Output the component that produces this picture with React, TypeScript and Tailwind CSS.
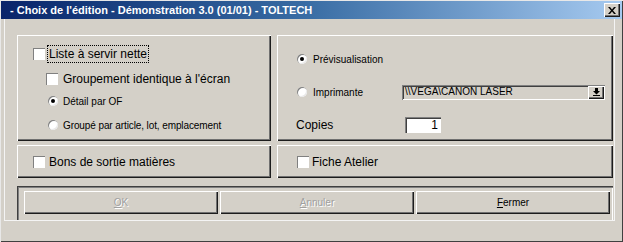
import React from "react";

const raised = "shadow-[inset_1px_1px_0_#ffffff,inset_-1px_-1px_0_#1c1c1c,inset_-2px_-2px_0_#707070]";
const sunken = "shadow-[inset_1px_1px_0_#808080,inset_-1px_-1px_0_#ffffff]";

function CheckBox() {
  return <span className={`w-[12px] h-[12px] bg-white shrink-0 ${sunken}`} />;
}

function Radio({ checked }: { checked?: boolean }) {
  return (
    <span className="w-[10px] h-[10px] rounded-full bg-white shrink-0 flex items-center justify-center shadow-[inset_1px_1px_0_#808080,inset_-1px_-1px_0_#e8e8e8]">
      {checked && <span className="w-[4px] h-[4px] rounded-full bg-black" />}
    </span>
  );
}

function DialogButton({ label, accel, disabled }: { label: string; accel: string; disabled?: boolean }) {
  const rest = label.slice(1);
  return (
    <div
      className={`w-[194px] h-[23px] flex items-center justify-center text-[10px] ${raised} ${
        disabled ? "text-[#a0a0a0] [text-shadow:1px_1px_0_#ffffff]" : "text-black"
      }`}
    >
      <span>
        <span className="underline">{accel}</span>
        {rest}
      </span>
    </div>
  );
}

export default function App() {
  return (
    <div
      className="w-[623px] h-[242px] bg-[#d4d0c8] flex flex-col text-black shadow-[inset_1px_1px_0_#e8e8e8,inset_-1px_-1px_0_#404040]"
      style={{ fontFamily: '"Liberation Sans", Arial, sans-serif' }}
    >
      {/* title bar */}
      <div className="h-[18px] mx-[1px] mt-[1px] flex items-center bg-gradient-to-r from-[#0a246a] via-[#3a6ea5] to-[#a6caf0]">
        <span className="ml-[9px] text-white font-bold text-[11px]">
          - Choix de l'édition - Démonstration 3.0 (01/01) - TOLTECH
        </span>
        <div className={`ml-auto mr-[2px] w-[16px] h-[14px] bg-[#d4d0c8] flex items-center justify-center ${raised}`}>
          <svg width="8" height="7" viewBox="0 0 8 7">
            <path d="M0 0h2l2 2.5L6 0h2L5 3.5 8 7H6L4 4.5 2 7H0l3-3.5z" fill="#000" />
          </svg>
        </div>
      </div>

      {/* body */}
      <div className="flex-1 ml-[4px] mr-[8px] border-l border-r border-b border-[#f4f4f4] pl-[12px] pt-[16px] flex flex-col">
        <div className="flex gap-[6px]">
          {/* left panel */}
          <div className={`w-[254px] h-[106px] flex flex-col pl-[16px] ${raised}`}>
            <div className="h-[18px] mt-[10px] flex items-center">
              <CheckBox />
              <span className="ml-[3px] px-[1px] text-[12px] leading-[16px] outline outline-1 outline-dotted outline-black">
                Liste à servir nette
              </span>
            </div>
            <div className="h-[18px] mt-[7px] ml-[13px] flex items-center">
              <CheckBox />
              <span className="ml-[5px] text-[12px]">Groupement identique à l'écran</span>
            </div>
            <div className="h-[18px] mt-[4px] ml-[15px] flex items-center">
              <Radio checked />
              <span className="ml-[5px] text-[10px]">Détail par OF</span>
            </div>
            <div className="h-[18px] mt-[6px] ml-[15px] flex items-center">
              <Radio />
              <span className="ml-[5px] text-[10px] tracking-[-0.1px]">Groupé par article, lot, emplacement</span>
            </div>
          </div>

          {/* right panel */}
          <div className={`w-[336px] h-[106px] flex flex-col pl-[20px] ${raised}`}>
            <div className="h-[18px] mt-[15px] flex items-center">
              <Radio checked />
              <span className="ml-[6px] text-[10px]">Prévisualisation</span>
            </div>
            <div className="h-[18px] mt-[15px] flex items-center">
              <Radio />
              <span className="ml-[6px] text-[10px] w-[89px]">Imprimante</span>
              <div className="w-[203px] h-[15px] bg-[#d4d0c8] flex items-center shadow-[inset_1px_1px_0_#808080,inset_-1px_-1px_0_#ffffff,inset_2px_2px_0_#404040]">
                <span className="ml-[3px] text-[10px] flex-1 leading-none">\\VEGA\CANON LASER</span>
                <div className={`w-[16px] h-[13px] mr-[1px] flex items-center justify-center ${raised}`}>
                  <svg width="7" height="8" viewBox="0 0 7 8">
                    <path d="M2 0h3v3h2L3.5 6.5 0 3h2z" fill="#000" />
                    <rect x="0" y="7" width="7" height="1" fill="#000" />
                  </svg>
                </div>
              </div>
            </div>
            <div className="h-[18px] mt-[15px] flex items-center">
              <span className="text-[12px] w-[109px] -ml-[1px]">Copies</span>
              <div className="w-[36px] h-[16px] bg-white flex items-center justify-end pr-[3px] text-[12px] shadow-[inset_1px_1px_0_#808080,inset_2px_2px_0_#404040,inset_-1px_-1px_0_#ffffff]">
                1
              </div>
            </div>
          </div>
        </div>

        <div className="flex gap-[6px] mt-[4px]">
          <div className={`w-[254px] h-[33px] flex items-center pl-[16px] ${raised}`}>
            <CheckBox />
            <span className="ml-[4px] text-[12px]">Bons de sortie matières</span>
          </div>
          <div className={`w-[336px] h-[33px] flex items-center pl-[20px] ${raised}`}>
            <CheckBox />
            <span className="ml-[3px] text-[12px]">Fiche Atelier</span>
          </div>
        </div>

        {/* buttons */}
        <div className="mt-[8px] w-[596px] flex-1 flex gap-[2px] pl-[7px] pt-[5px] shadow-[inset_1px_1px_0_#404040,inset_2px_2px_0_#808080,inset_-1px_0_0_#ffffff]">
          <DialogButton label="OK" accel="O" disabled />
          <DialogButton label="Annuler" accel="A" disabled />
          <DialogButton label="Fermer" accel="F" />
        </div>
      </div>

      {/* status strip */}
      <div className="h-[21px]" />
    </div>
  );
}
